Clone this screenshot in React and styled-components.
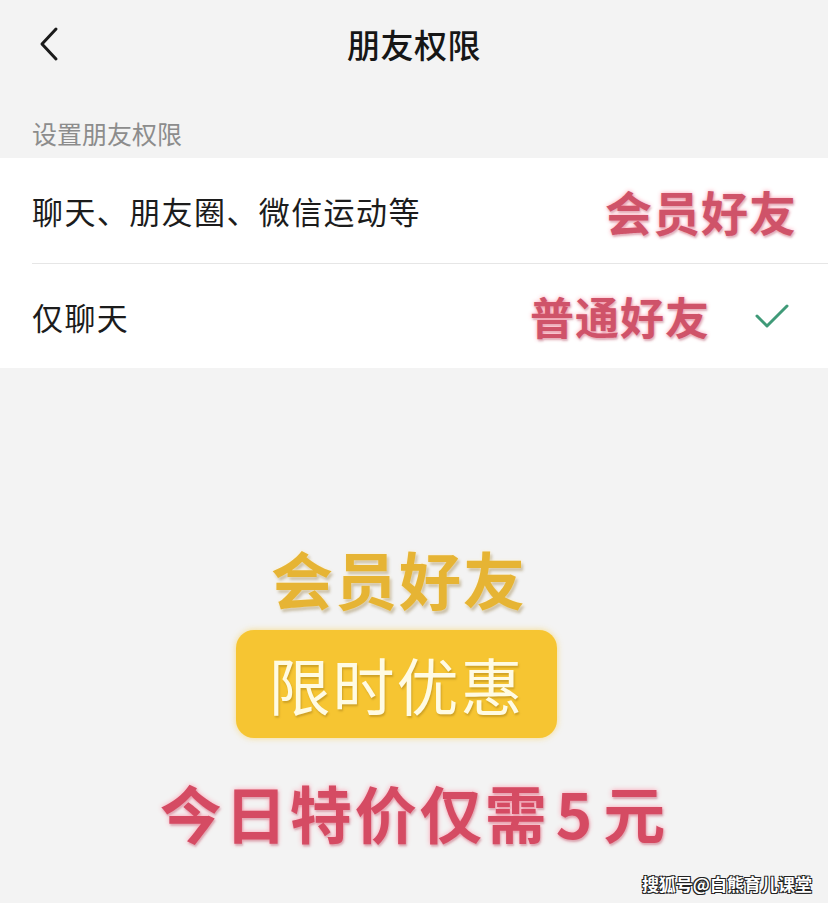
import React from 'react';
import styled, {createGlobalStyle} from 'styled-components';

// ---- styles ------
const GlobalStyle = createGlobalStyle`
    html, body {
        margin: 0;
        padding: 0;
        background: #f3f3f3;
    }
    body {
        font-family: "Noto Sans CJK SC", "Noto Sans", sans-serif;
    }
`;

const Page = styled.div`
    position: relative;
    width: 828px;
    height: 903px;
    background: #f3f3f3;
    overflow: hidden;
`;

const Header = styled.div`
    height: 88px;
    display: grid;
    grid-template-columns: 1fr auto 1fr;
    align-items: center;
    padding: 0 32px;
`;

const BackButton = styled.button`
    background: none;
    border: none;
    padding: 0 0 0 6px;
    width: 40px;
    height: 40px;
    display: flex;
    align-items: center;
    cursor: pointer;
`;

const Title = styled.div`
    font-size: 33px;
    font-weight: 500;
    color: #161616;
    letter-spacing: 0.5px;
`;

const SectionLabel = styled.div`
    height: 70px;
    display: flex;
    align-items: flex-end;
    padding: 0 32px 7px;
    box-sizing: border-box;
    font-size: 25px;
    color: #8c8c8c;
`;

const Panel = styled.div`
    background: #fff;
`;

const Row = styled.div`
    height: 105px;
    display: flex;
    align-items: center;
    justify-content: space-between;
    margin-left: 32px;
    padding-right: ${p => p.$right}px;
    border-top: ${p => (p.$divider ? '1px solid #e6e6e6' : 'none')};
    box-sizing: border-box;
`;

const RowText = styled.div`
    font-size: 31px;
    color: #1c1c1c;
    letter-spacing: 1.4px;
`;

const RowRight = styled.div`
    display: flex;
    align-items: center;
    gap: 44px;
`;

const Tag = styled.div`
    font-size: ${p => p.$size}px;
    font-weight: 700;
    color: #cf5369;
    text-shadow: 0 0 4px rgba(255, 150, 170, 0.9), 1px 2px 2px rgba(120, 40, 60, 0.3);
    letter-spacing: 1px;
`;

const Promo = styled.div`
    display: flex;
    flex-direction: column;
    align-items: center;
    padding-top: 172px;
`;

const GoldTitle = styled.div`
    font-size: 62px;
    line-height: 77px;
    font-weight: 700;
    color: #e6b434;
    letter-spacing: 2px;
    margin-right: 30px;
    text-shadow: 0 0 3px rgba(255, 240, 200, 0.9), 2px 3px 3px rgba(120, 90, 20, 0.35);
`;

const Badge = styled.div`
    margin-top: 13px;
    margin-right: 35px;
    width: 321px;
    height: 108px;
    border-radius: 18px;
    background: #f6c532;
    box-shadow: 0 0 6px rgba(250, 210, 90, 0.7);
    display: flex;
    align-items: center;
    justify-content: center;
    font-size: 62px;
    font-weight: 400;
    color: #fffbe3;
    letter-spacing: 2px;
    text-shadow: 1px 2px 2px rgba(150, 110, 20, 0.4);
`;

const PriceLine = styled.div`
    margin-top: 36px;
    font-size: 62px;
    line-height: 77px;
    font-weight: 700;
    color: #d54b63;
    letter-spacing: 3px;
    text-shadow: 0 0 5px rgba(255, 150, 170, 0.9), 1px 2px 2px rgba(120, 30, 50, 0.3);
`;

const Digit = styled.span`
    margin: 0 8px 0 6px;
`;

const Watermark = styled.div`
    position: absolute;
    right: 16px;
    bottom: 7px;
    font-size: 17px;
    font-weight: 700;
    color: #fff;
    text-shadow: -1px -1px 0 #222, 1px -1px 0 #222, -1px 1px 0 #222, 1px 1px 0 #222;
`;

function Chevron() {
    return (
        <svg width="22" height="36" viewBox="0 0 22 36">
            <path d="M18 3 L4 18 L18 33" fill="none" stroke="#1a1a1a" strokeWidth="3" strokeLinecap="round" strokeLinejoin="round"/>
        </svg>
    );
}

function Check() {
    return (
        <svg width="36" height="28" viewBox="0 0 36 28">
            <path d="M3 14 L13 24 L33 4" fill="none" stroke="#3f9a78" strokeWidth="3" strokeLinecap="round" strokeLinejoin="round"/>
        </svg>
    );
}

function App() {
    return (
        <Page>
            <GlobalStyle/>
            <Header>
                <BackButton aria-label="back"><Chevron/></BackButton>
                <Title>朋友权限</Title>
                <div/>
            </Header>

            <SectionLabel>设置朋友权限</SectionLabel>

            <Panel>
                <Row $right={31}>
                    <RowText>聊天、朋友圈、微信运动等</RowText>
                    <Tag $size={47}>会员好友</Tag>
                </Row>
                <Row $right={38} $divider>
                    <RowText>仅聊天</RowText>
                    <RowRight>
                        <Tag $size={44}>普通好友</Tag>
                        <Check/>
                    </RowRight>
                </Row>
            </Panel>

            <Promo>
                <GoldTitle>会员好友</GoldTitle>
                <Badge>限时优惠</Badge>
                <PriceLine>今日特价仅需<Digit>5</Digit>元</PriceLine>
            </Promo>

            <Watermark>搜狐号@白熊育儿课堂</Watermark>
        </Page>
    );
}

export default App;
